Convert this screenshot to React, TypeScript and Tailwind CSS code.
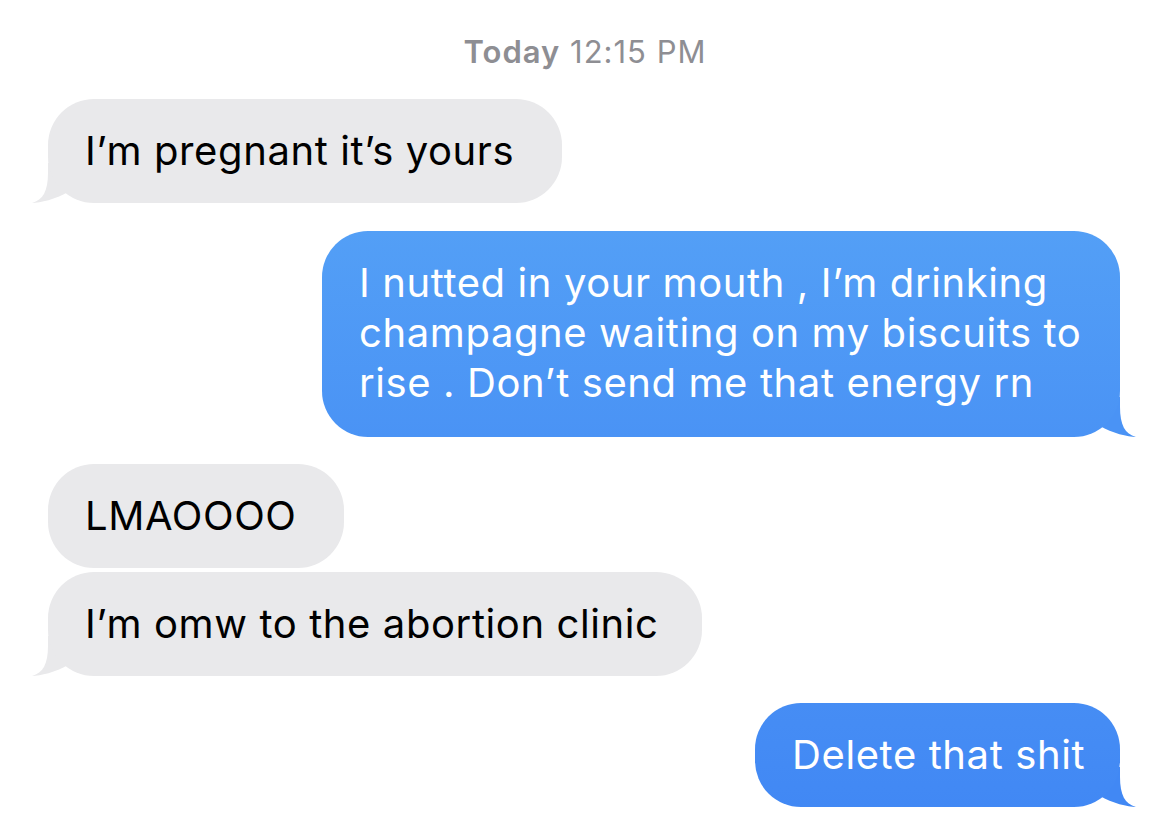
import React from 'react';

type Side = 'in' | 'out';

interface Message {
  id: number;
  side: Side;
  lines: string[];
  width: number;
  tail: boolean;
  gap: number;
  from?: string;
  to?: string;
}

const messages: Message[] = [
  { id: 1, side: 'in', lines: ['I’m pregnant it’s yours'], width: 514, tail: true, gap: 30 },
  {
    id: 2,
    side: 'out',
    lines: ['I nutted in your mouth , I’m drinking', 'champagne waiting on my biscuits to', 'rise . Don’t send me that energy rn'],
    width: 798,
    tail: true,
    gap: 28,
    from: '#539ff6',
    to: '#4a93f5'
  },
  { id: 3, side: 'in', lines: ['LMAOOOO'], width: 296, tail: false, gap: 27 },
  { id: 4, side: 'in', lines: ['I’m omw to the abortion clinic'], width: 654, tail: true, gap: 4 },
  { id: 5, side: 'out', lines: ['Delete that shit'], width: 365, tail: true, gap: 27, from: '#468df4', to: '#4188f4' }
];

// iMessage style tail; sits behind the bubble so only the part past the rounded corner shows
const Tail: React.FC<{ side: Side; fill: string }> = ({ side, fill }) => (
  <svg
    width="64"
    height="44"
    viewBox="0 0 64 44"
    className={`absolute bottom-0 ${side === 'in' ? 'left-[-16px]' : 'right-[-16px] -scale-x-100'}`}
  >
    <path d="M16,4 L16,14 C16,32 11,41 0,44 C8,44 24,40 36,33 L36,4 Z" fill={fill} />
  </svg>
);

const Bubble: React.FC<{ msg: Message }> = ({ msg }) => {
  const isOut = msg.side === 'out';
  const gradient = isOut ? `linear-gradient(to bottom, ${msg.from}, ${msg.to})` : undefined;
  const multi = msg.lines.length > 1;

  return (
    <div
      className={`flex ${isOut ? 'justify-end pr-[50px]' : 'justify-start pl-[48px]'}`}
      style={{ marginTop: msg.gap }}
    >
      <div
        className={`relative pl-[37px] pt-[27px] ${multi ? 'pb-[29px]' : 'pb-[27px]'} text-[40px] tracking-[0.6px] leading-[50px] whitespace-nowrap ${
          isOut ? 'text-white' : 'text-black'
        }`}
        style={{ width: msg.width }}
      >
        {msg.tail && <Tail side={msg.side} fill={isOut ? msg.to! : '#e9e9eb'} />}
        <div
          className={`absolute inset-0 rounded-[46px] ${isOut ? '' : 'bg-[#e9e9eb]'}`}
          style={{ background: gradient }}
        />
        <div className="relative">
          {msg.lines.map((line, i) => (
            <div key={i}>{line}</div>
          ))}
        </div>
      </div>
    </div>
  );
};

export default function App() {
  return (
    <div className="w-[1170px] h-[819px] bg-white overflow-hidden flex flex-col font-['Inter',sans-serif]">
      <div className="mt-[35px] text-center text-[31px] tracking-[1px] leading-[34px] text-[#8e8e93]">
        <span className="font-semibold">Today</span> 12:15 PM
      </div>
      {messages.map((m) => (
        <Bubble key={m.id} msg={m} />
      ))}
    </div>
  );
}
